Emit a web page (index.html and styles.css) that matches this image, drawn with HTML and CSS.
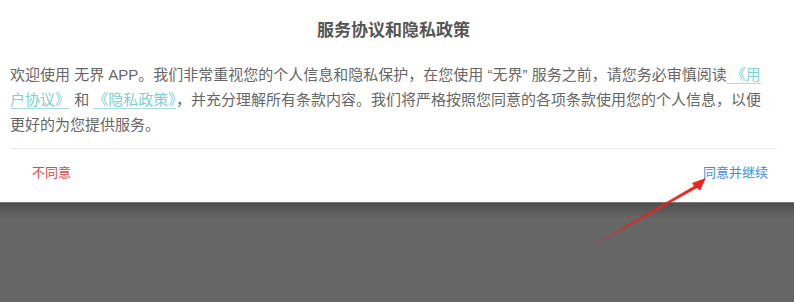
FILE: index.html
```html
<!DOCTYPE html>
<html lang="zh-CN">
<head>
<meta charset="utf-8">
<title>服务协议和隐私政策</title>
<link rel="stylesheet" href="styles.css">
</head>
<body>
<div class="dialog">
  <div class="title">服务协议和隐私政策</div>
  <p class="content">欢迎使用 无界 APP。我们非常重视您的个人信息和隐私保护，在您使用 “无界” 服务之前，请您务必审慎阅读<a class="link"> 《用户协议》</a> 和 <a class="link">《隐私政策》</a>，并充分理解所有条款内容。我们将严格按照您同意的各项条款使用您的个人信息，以便更好的为您提供服务。</p>
  <div class="divider"></div>
  <div class="actions">
    <span class="btn btn-disagree">不同意</span>
    <span class="btn btn-agree">同意并继续</span>
  </div>
</div>
<div class="backdrop"></div>
<svg class="arrow" width="794" height="302" viewBox="0 0 794 302">
  <defs>
    <linearGradient id="fade" x1="595" y1="243" x2="706" y2="178" gradientUnits="userSpaceOnUse">
      <stop offset="0" stop-color="#e8231b" stop-opacity="0.1"/>
      <stop offset="0.3" stop-color="#e8231b" stop-opacity="0.85"/>
      <stop offset="1" stop-color="#ee2218"/>
    </linearGradient>
  </defs>
  <polygon fill="url(#fade)" points="595,243.5 694,186 692,183 706,178 700,190.5 697,188 596,244.5"/>
</svg>
</body>
</html>
```
FILE: styles.css
```css
html, body {
  margin: 0;
  padding: 0;
}
body {
  width: 794px;
  height: 302px;
  overflow: hidden;
  background: #666666;
  font-family: "Liberation Sans", "Noto Sans CJK SC", sans-serif;
  position: relative;
}
.dialog {
  background: #ffffff;
  height: 202px;
  padding: 0 17px 0 10px;
  box-sizing: border-box;
  display: flex;
  flex-direction: column;
}
.title {
  padding-top: 20px;
  height: 42px;
  line-height: 22px;
  font-size: 17px;
  font-weight: bold;
  color: #555555;
  text-align: center;
}
.content {
  margin: 0 6px 0 0;
  font-size: 15px;
  line-height: 25px;
  color: #666666;
  height: 86px;
}
.link {
  color: #7ccfcf;
  text-decoration: underline;
  text-decoration-color: #a6dede;
  text-underline-offset: 3px;
}
.divider {
  height: 1px;
  background: #e6e6e6;
}
.actions {
  display: flex;
  justify-content: space-between;
  padding: 14px 9px 0 22px;
  line-height: 18px;
  font-size: 13px;
  font-family: "Noto Sans CJK SC", sans-serif;
}
.btn-disagree {
  color: #e8463d;
}
.btn-agree {
  color: #3a8ee6;
}
.backdrop {
  height: 100px;
  border-top: 1px solid #7a7a7a;
  background: linear-gradient(#4f4f4f, #666666 15px);
}
.arrow {
  position: absolute;
  left: 0;
  top: 0;
}
```
